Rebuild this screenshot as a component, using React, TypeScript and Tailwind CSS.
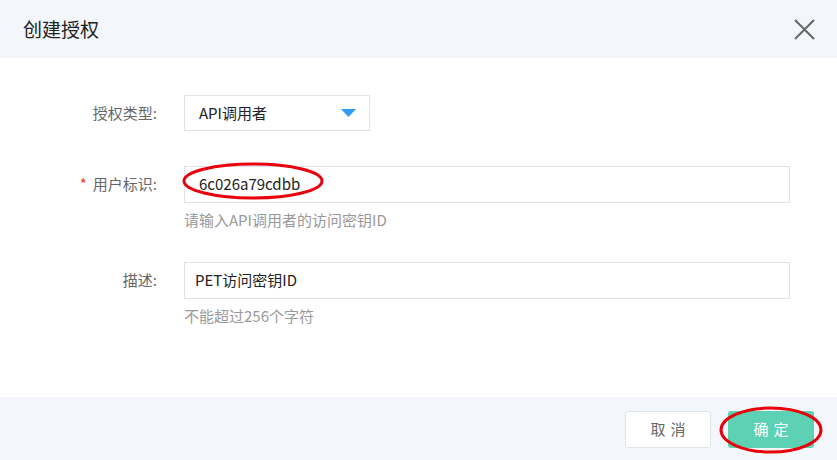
const font = { fontFamily: '"Noto Sans CJK SC", "Noto Sans", sans-serif' };

const FormRow = ({
  label,
  required,
  children,
  hint,
}: {
  label: string;
  required?: boolean;
  children: React.ReactNode;
  hint?: string;
}) => (
  <div className="flex">
    <div className="w-[184px] shrink-0 pr-[27px] h-[36px] flex items-center justify-end text-[15px] text-[#666]">
      {required && <span className="text-[#f04134] mr-[6px]">*</span>}
      {label}
    </div>
    <div className="flex flex-col">
      {children}
      {hint && <div className="mt-[7px] text-[15px] leading-[20px] text-[#999]">{hint}</div>}
    </div>
  </div>
);

export default function App() {
  return (
    <div className="relative w-[837px] h-[460px] bg-white overflow-hidden" style={font}>
      {/* Header */}
      <div className="h-[58px] bg-[#f3f6fa] flex items-center justify-between pl-[23px] pr-[22px]">
        <span className="text-[19px] text-[#222]">创建授权</span>
        <svg width="21" height="21" viewBox="0 0 21 21">
          <path d="M1 1 L20 20 M20 1 L1 20" stroke="#666" strokeWidth="2" fill="none" />
        </svg>
      </div>

      {/* Body */}
      <div className="h-[339px] pt-[37px] flex flex-col">
        <FormRow label="授权类型:">
          <div className="w-[186px] h-[36px] border border-[#dde3ea] bg-white flex items-center justify-between pl-[14px] pr-[13px] text-[15px] text-[#222]">
            <span>API调用者</span>
            <svg width="15" height="8" viewBox="0 0 15 8">
              <path d="M0 0 H15 L7.5 8 Z" fill="#3399f3" />
            </svg>
          </div>
        </FormRow>
        <div className="h-[35px]" />
        <FormRow label="用户标识:" required hint="请输入API调用者的访问密钥ID">
          <div className="w-[606px] h-[37px] border border-[#dde3ea] bg-white flex items-center pl-[14px] text-[15px] text-[#222]">
            6c026a79cdbb
          </div>
        </FormRow>
        <div className="h-[32px]" />
        <FormRow label="描述:" hint="不能超过256个字符">
          <div className="w-[606px] h-[37px] border border-[#dde3ea] bg-white flex items-center pl-[10px] text-[15px] text-[#222]">
            PET访问密钥ID
          </div>
        </FormRow>
      </div>

      {/* Footer */}
      <div className="h-[63px] bg-[#f3f6fa] flex justify-end items-start pt-[14px] pr-[23px] gap-[17px]">
        <button className="w-[86px] h-[37px] border border-[#dde3ea] rounded-[3px] bg-white text-[15px] text-[#666] tracking-[5px] pl-[5px]">
          取消
        </button>
        <button className="w-[86px] h-[37px] rounded-[3px] bg-[#5dd1b4] text-[15px] text-white tracking-[5px] pl-[5px]">
          确定
        </button>
      </div>

      {/* Annotation ellipses */}
      <svg className="absolute left-0 top-0 pointer-events-none" width="837" height="460">
        <ellipse cx="253" cy="181" rx="69" ry="17" stroke="#e8000b" strokeWidth="3" fill="none" />
        <ellipse cx="771" cy="430" rx="50" ry="22" stroke="#e8000b" strokeWidth="3" fill="none" />
      </svg>
    </div>
  );
}
